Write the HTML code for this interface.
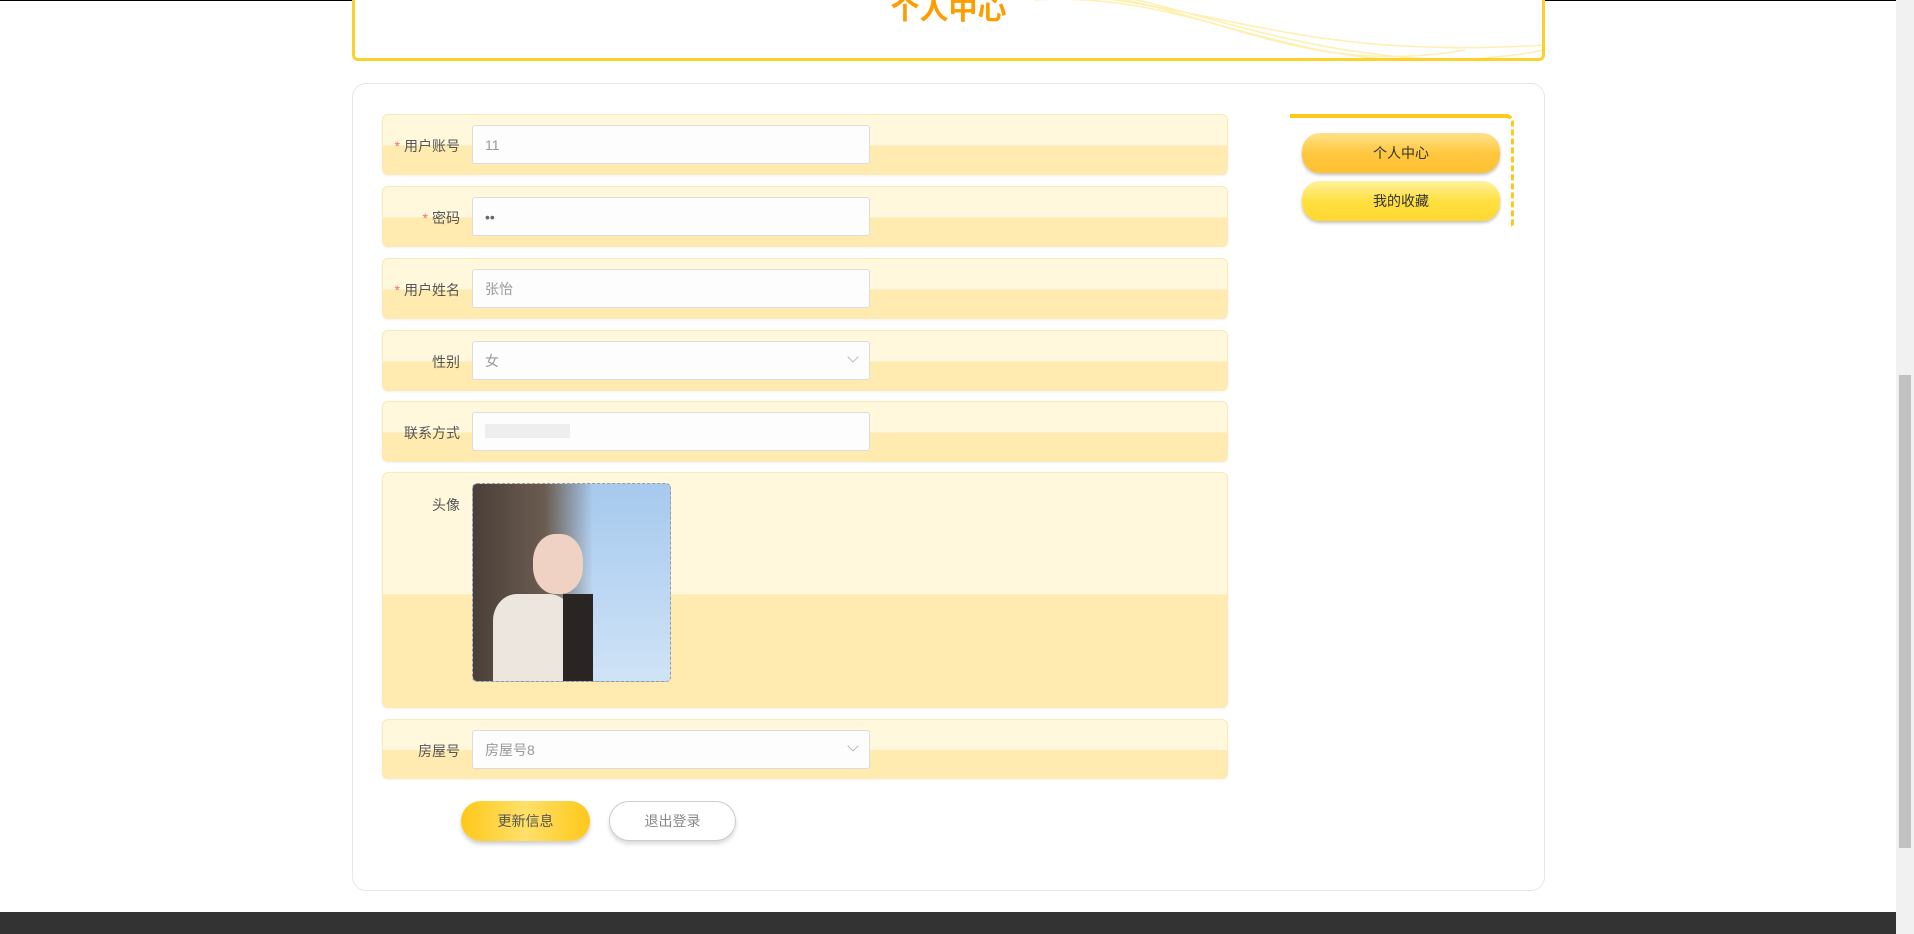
<!DOCTYPE html>
<html><head><meta charset="utf-8"><style>
*{box-sizing:border-box;margin:0;padding:0}
body{width:1914px;height:934px;position:relative;background:#fff;font-family:"Liberation Sans","Noto Sans CJK SC",sans-serif;overflow:hidden}
.abs{position:absolute}
.hdr{left:352px;top:-10px;width:1193px;height:71px;border:3px solid #ffd02a;border-top:none;border-radius:0 0 6px 6px;overflow:hidden;background:#fff}
.hdr .t{position:absolute;left:0;right:0;top:-4px;text-align:center;color:#ff9c00;font-size:29px;font-weight:bold}
.card{left:352px;top:83px;width:1193px;height:808px;border:1px solid #e6e6e6;border-radius:14px}
.row{position:absolute;left:382px;width:846px;border:1px solid #fbe9b8;border-radius:6px;background:linear-gradient(#fff8dc 0,#fff8dc 52%,#ffeab0 52%,#ffeab0 100%);box-shadow:0 1px 2px rgba(0,0,0,.06)}
.lbl{position:absolute;right:767px;font-size:14px;color:#555;white-space:nowrap}
.lbl b{color:#f56c6c;font-weight:normal;margin-right:4px}
.inp{position:absolute;left:89px;width:398px;height:39px;background:#fdfdfd;border:1px solid #dcdcdc;border-radius:3px;font-size:14px;color:#999;padding:11px 12px;line-height:16px}
.arr{position:absolute;right:12px;top:11px;width:8px;height:8px;border-right:1px solid #bbb;border-bottom:1px solid #bbb;transform:rotate(45deg)}
.btn{position:absolute;height:40px;border-radius:20px;font-size:14px;text-align:center;line-height:40px;color:#555}
.side{position:absolute;left:1302px;width:198px;height:40px;border-radius:18px;text-align:center;line-height:40px;font-size:14px;color:#333;box-shadow:0 2px 3px rgba(0,0,0,.25)}
</style></head><body>
<div class="abs" style="left:0;top:0;width:1914px;height:1px;background:#000"></div>
<div class="abs hdr"><svg class="abs" style="left:680px;top:0" width="510" height="80"><g fill="none" stroke="#fff0b0" stroke-width="1.5"><path d="M0 10 C150 0 250 80 420 70 S500 40 510 30"/><path d="M20 0 C170 10 260 90 430 60"/><path d="M40 5 C190 20 280 70 510 55"/><path d="M60 0 C200 30 300 80 510 70"/></g></svg><div class="t">个人中心</div></div>
<div class="abs card"></div>
<div class="row" style="top:114px;height:61px"><div class="lbl" style="top:21px"><b>*</b>用户账号</div><div class="inp" style="top:10px">11</div></div>
<div class="row" style="top:186px;height:61px"><div class="lbl" style="top:21px"><b>*</b>密码</div><div class="inp" style="top:10px;color:#666">••</div></div>
<div class="row" style="top:258px;height:61px"><div class="lbl" style="top:21px"><b>*</b>用户姓名</div><div class="inp" style="top:10px">张怡</div></div>
<div class="row" style="top:330px;height:61px"><div class="lbl" style="top:21px">性别</div><div class="inp" style="top:10px">女<span class="arr"></span></div></div>
<div class="row" style="top:401px;height:61px"><div class="lbl" style="top:21px">联系方式</div><div class="inp" style="top:10px"><span style="display:inline-block;width:85px;height:14px;background:#eee"></span></div></div>
<div class="row" style="top:472px;height:236px"><div class="lbl" style="top:22px">头像</div>
<div class="abs" style="left:89px;top:10px;width:199px;height:199px;border:1px dashed #999;border-radius:5px;overflow:hidden;background:linear-gradient(#a6c9ee,#cfe3f6)">
<div class="abs" style="left:0;top:0;width:120px;height:199px;background:linear-gradient(90deg,#4a3f38,#6b5c50 60%,transparent)"></div>
<div class="abs" style="left:60px;top:50px;width:50px;height:60px;border-radius:45%;background:#f0d2c4"></div>
<div class="abs" style="left:20px;top:110px;width:80px;height:89px;background:#ece6df;border-radius:30% 30% 0 0"></div>
<div class="abs" style="left:90px;top:110px;width:30px;height:89px;background:#2a2522"></div></div></div>
<div class="row" style="top:719px;height:60px"><div class="lbl" style="top:21px">房屋号</div><div class="inp" style="top:10px">房屋号8<span class="arr"></span></div></div>
<div class="btn" style="left:461px;top:801px;width:129px;background:linear-gradient(90deg,#ffc81a,#ffe06a 50%,#ffc81a);box-shadow:0 3px 4px rgba(0,0,0,.2)">更新信息</div>
<div class="btn" style="left:609px;top:801px;width:127px;border:1px solid #ccc;background:#fff;color:#888;line-height:38px;box-shadow:0 3px 4px rgba(0,0,0,.15)">退出登录</div>
<div class="abs" style="left:1290px;top:114px;width:224px;height:113px;border-top:4px solid #ffc81a;border-right:3px dashed #ffc81a;border-radius:0 8px 0 0"></div>
<div class="side" style="top:133px;background:linear-gradient(#ffe18a,#ffc840 50%,#ffc030)">个人中心</div>
<div class="side" style="top:181px;background:linear-gradient(#fff2a0,#ffe040 50%,#ffd830)">我的收藏</div>
<div class="abs" style="left:0;top:912px;width:1896px;height:22px;background:#333"></div>
<div class="abs" style="left:1896px;top:0;width:18px;height:934px;background:#f1f1f1"></div>
<div class="abs" style="left:1899px;top:375px;width:12px;height:473px;background:#c1c1c1"></div>
</body></html>
